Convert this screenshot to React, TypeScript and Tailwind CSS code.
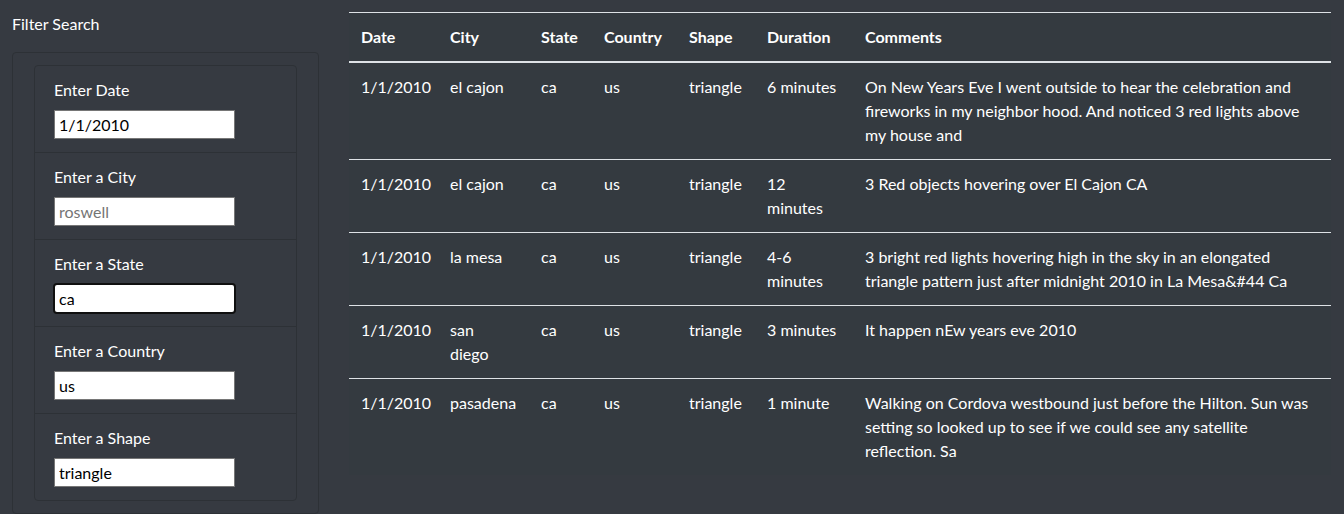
import React from "react";

const rows = [
  { date: "1/1/2010", city: "el cajon", state: "ca", country: "us", shape: "triangle", duration: "6 minutes", comments: "On New Years Eve I went outside to hear the celebration and fireworks in my neighbor hood. And noticed 3 red lights above my house and" },
  { date: "1/1/2010", city: "el cajon", state: "ca", country: "us", shape: "triangle", duration: "12 minutes", comments: "3 Red objects hovering over El Cajon CA" },
  { date: "1/1/2010", city: "la mesa", state: "ca", country: "us", shape: "triangle", duration: "4-6 minutes", comments: "3 bright red lights hovering high in the sky in an elongated triangle pattern just after midnight 2010 in La Mesa&#44 Ca" },
  { date: "1/1/2010", city: "san diego", state: "ca", country: "us", shape: "triangle", duration: "3 minutes", comments: "It happen nEw years eve 2010" },
  { date: "1/1/2010", city: "pasadena", state: "ca", country: "us", shape: "triangle", duration: "1 minute", comments: "Walking on Cordova westbound just before the Hilton. Sun was setting so looked up to see if we could see any satellite reflection. Sa" },
];

const filters = [
  { label: "Enter Date", value: "1/1/2010" },
  { label: "Enter a City", placeholder: "roswell" },
  { label: "Enter a State", value: "ca", focused: true },
  { label: "Enter a Country", value: "us" },
  { label: "Enter a Shape", value: "triangle" },
];

const font = '"Lato", "Noto Sans", sans-serif';

export default function App() {
  return (
    <div
      className="w-[1344px] h-[514px] bg-[#363a41] text-white flex overflow-hidden"
      style={{ fontFamily: font }}
    >
      <div className="w-[337px] pl-[12px] pt-[12px] shrink-0">
        <div className="text-[16px] leading-[24px]">Filter Search</div>
        <div className="mt-[16px] w-[307px] border border-[#2d3136] rounded-[4px] px-[21px] pt-[12px] pb-[12px]">
          <div className="border border-[#2d3136] rounded-[4px]">
            {filters.map((f, i) => (
              <div
                key={f.label}
                className={`px-[19px] pt-[12px] pb-[13px] ${i > 0 ? "border-t border-[#2d3136]" : ""}`}
              >
                <div className="text-[16px] leading-[24px] mb-[8px]">{f.label}</div>
                <input
                  readOnly
                  defaultValue={f.value}
                  placeholder={f.placeholder}
                  className={`block w-[181px] h-[29px] bg-white text-black text-[16px] px-[4px] placeholder:text-[#757575] ${
                    f.focused
                      ? "border border-white rounded-[3px] outline-2 outline-[#101010] outline-offset-[-1px]"
                      : "border border-[#767676] outline-none"
                  }`}
                  style={{ fontFamily: font }}
                />
              </div>
            ))}
          </div>
        </div>
      </div>
      <div className="pt-[12px] pl-[12px]">
        <table className="table-fixed w-[982px] bg-[#343a40] border-collapse text-[16px] leading-[24px]">
          <colgroup>
            <col className="w-[89px]" />
            <col className="w-[91px]" />
            <col className="w-[63px]" />
            <col className="w-[85px]" />
            <col className="w-[78px]" />
            <col className="w-[98px]" />
            <col className="w-[478px]" />
          </colgroup>
          <thead>
            <tr className="border-t border-[#dee2e6] border-b-2 border-b-[#dee2e6]">
              {["Date", "City", "State", "Country", "Shape", "Duration", "Comments"].map((h) => (
                <th key={h} className="text-left font-bold px-[12px] pt-[12px] pb-[12px] align-bottom">
                  {h}
                </th>
              ))}
            </tr>
          </thead>
          <tbody>
            {rows.map((r, i) => (
              <tr key={i} className={i < rows.length - 1 ? "border-b border-[#dee2e6]" : ""}>
                {[r.date, r.city, r.state, r.country, r.shape, r.duration, r.comments].map((c, j) => (
                  <td key={j} className="px-[12px] py-[12px] align-top">
                    {c === "san diego" ? (
                      <>
                        san
                        <br />
                        diego
                      </>
                    ) : (
                      c
                    )}
                  </td>
                ))}
              </tr>
            ))}
          </tbody>
        </table>
      </div>
    </div>
  );
}
